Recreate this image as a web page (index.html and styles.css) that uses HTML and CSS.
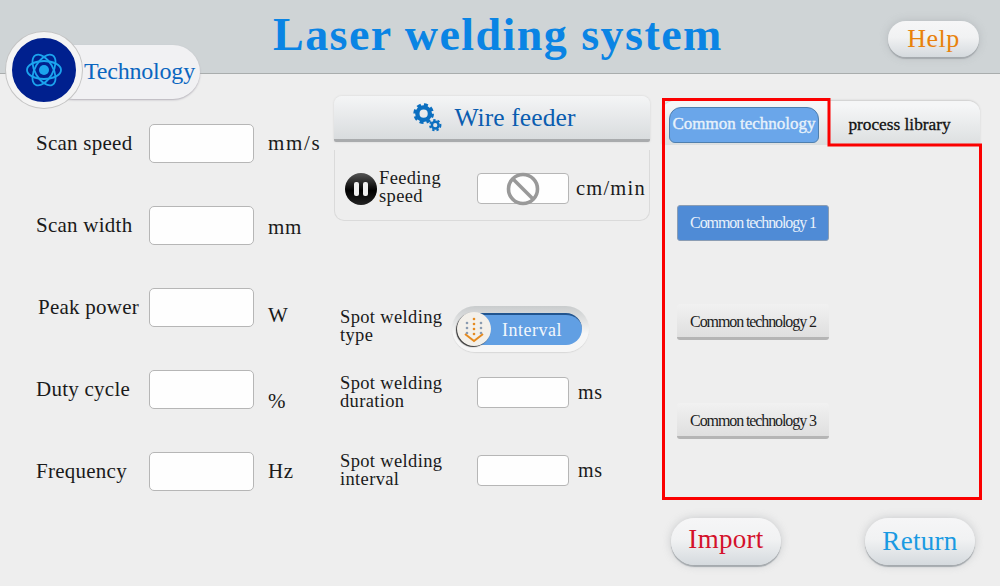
FILE: index.html
```html
<!DOCTYPE html>
<html lang="en">
<head>
<meta charset="utf-8">
<title>Laser welding system</title>
<link rel="stylesheet" href="styles.css">
</head>
<body>
<div class="screen">
  <header class="topbar">
    <h1 class="title">Laser welding system</h1>
    <button class="pill help">Help</button>
  </header>

  <div class="badge">
    <div class="badge-disc">
      <svg viewBox="0 0 40 40" width="40" height="40" fill="none" stroke="#1ba4ee" stroke-width="1.8">
        <circle cx="20" cy="20" r="5" fill="#1ba4ee" stroke="none"/>
        <ellipse cx="20" cy="20" rx="17" ry="9"/>
        <ellipse cx="20" cy="20" rx="17" ry="9" transform="rotate(60 20 20)"/>
        <ellipse cx="20" cy="20" rx="17" ry="9" transform="rotate(120 20 20)"/>
      </svg>
    </div>
    <span class="badge-text">Technology</span>
  </div>

  <main class="content">
    <section class="col-left">
      <div class="row"><span class="label">Scan speed</span><div class="field"></div><span class="unit unit-wide">mm/s</span></div>
      <div class="row"><span class="label">Scan width</span><div class="field"></div><span class="unit nudge-s">mm</span></div>
      <div class="row"><span class="label peak">Peak power</span><div class="field"></div><span class="unit nudge-m">W</span></div>
      <div class="row"><span class="label">Duty cycle</span><div class="field"></div><span class="unit nudge-l">%</span></div>
      <div class="row"><span class="label">Frequency</span><div class="field"></div><span class="unit">Hz</span></div>
    </section>

    <section class="col-mid">
      <button class="wire">
        <svg viewBox="0 0 30 30" width="29" height="29" fill="none" stroke="#0b6fc0">
          <circle cx="11" cy="11" r="6.500" stroke-width="4.500"/>
          <circle cx="11" cy="11" r="9.200" stroke-width="3" stroke-dasharray="4.100 3.130"/>
          <circle cx="23" cy="23" r="3.500" stroke-width="2.600"/>
          <circle cx="23" cy="23" r="5.400" stroke-width="2" stroke-dasharray="2.400 2.130"/>
        </svg>
        <span>Wire feeder</span>
      </button>
      <div class="feed-panel">
        <span class="pause"><i></i><i></i></span>
        <span class="label-two feed-label">Feeding<br>speed</span>
        <div class="field small center">
          <svg viewBox="0 0 34 34" width="34" height="34" fill="none" stroke="#999" stroke-width="3.600">
            <circle cx="17" cy="17" r="14.500"/>
            <path d="M7 7l20 20"/>
          </svg>
        </div>
        <span class="unit feed-unit">cm/min</span>
      </div>

      <div class="spot spot-type">
        <span class="label-two raised">Spot welding<br>type</span>
        <div class="toggle">
          <div class="toggle-track">
            <span class="toggle-knob">
              <svg viewBox="0 0 30 30" width="30" height="30" fill="none">
                <g fill="#8a9bb0"><circle cx="8" cy="9" r="1.300"/><circle cx="8" cy="14" r="1.300"/><circle cx="8" cy="19" r="1.300"/><circle cx="22" cy="9" r="1.300"/><circle cx="22" cy="14" r="1.300"/><circle cx="22" cy="19" r="1.300"/></g>
                <g fill="#e58a1f"><circle cx="15" cy="5" r="1.300"/><circle cx="15" cy="10" r="1.300"/><circle cx="15" cy="15" r="1.300"/><circle cx="15" cy="20" r="1.300"/></g>
                <path d="M6 20l9 7 9-7" stroke="#e58a1f" stroke-width="2"/>
              </svg>
            </span>
            <span class="toggle-text">Interval</span>
          </div>
        </div>
      </div>
      <div class="spot spot-duration">
        <span class="label-two">Spot welding<br>duration</span>
        <div class="field small"></div>
        <span class="unit">ms</span>
      </div>
      <div class="spot spot-interval">
        <span class="label-two">Spot welding<br>interval</span>
        <div class="field small"></div>
        <span class="unit">ms</span>
      </div>
    </section>

    <section class="col-right">
      <div class="tabs">
        <button class="tab active">Common technology</button>
        <button class="tab">process library</button>
      </div>
      <div class="tab-panel">
        <button class="tech selected">Common technology 1</button>
        <button class="tech">Common technology 2</button>
        <button class="tech">Common technology 3</button>
      </div>
      <svg class="red-outline" viewBox="0 0 320 402" width="320" height="402" fill="none">
        <path d="M1.500 1.500H167V47H318.500V400.500H1.500Z" stroke="#fb0000" stroke-width="3"/>
      </svg>
      <div class="actions">
        <button class="pill import">Import</button>
        <button class="pill return">Return</button>
      </div>
    </section>
  </main>
</div>
</body>
</html>
```
FILE: styles.css
```css
* { box-sizing: border-box; }
html, body { margin: 0; padding: 0; }
body {
  width: 1000px;
  height: 586px;
  overflow: hidden;
  background: #eeeeee;
  font-family: "Liberation Serif", serif;
  color: #1a1a1a;
}
button { font-family: inherit; padding: 0; cursor: pointer; }
.screen { position: relative; width: 1000px; height: 586px; }

.topbar {
  height: 74px;
  background: #cfd4d6;
  border-bottom: 1px solid #a9adad;
  display: flex;
  align-items: flex-start;
  padding-left: 273px;
  padding-right: 21px;
  justify-content: space-between;
}
.title {
  margin: 7px 0 0;
  font-size: 46px;
  line-height: 56px;
  font-weight: 700;
  letter-spacing: 1.450px;
  color: #0a84e4;
  white-space: nowrap;
}
.pill {
  border: none;
  border-radius: 22px;
  background: linear-gradient(#f6f6f7 0%, #f1f2f3 45%, #d5dade 100%);
  box-shadow: 0 2px 1px #a5aaae, 0 0 8px rgba(150, 155, 160, .45);
}
.help {
  margin-top: 21px;
  width: 91px;
  height: 36px;
  font-size: 26px;
  color: #e8820c;
  letter-spacing: .5px;
}

.badge {
  position: absolute;
  left: 6px;
  top: 32px;
  width: 194px;
  height: 76px;
  display: flex;
  align-items: center;
}
.badge::before {
  content: "";
  position: absolute;
  left: 40px;
  top: 13px;
  width: 154px;
  height: 54px;
  border-radius: 27px;
  background: #f1f1f3;
  box-shadow: 0 1px 2px #b3b0b8;
}
.badge-disc {
  position: relative;
  width: 76px;
  height: 76px;
  border-radius: 50%;
  background: #00208e;
  border: 6px solid #f4f4f4;
  box-shadow: 0 0 0 1px #c4c4c4;
  display: flex;
  align-items: center;
  justify-content: center;
}
.badge-text {
  position: relative;
  margin: 3px 0 0 2px;
  font-size: 24px;
  color: #0a66c0;
  letter-spacing: -.2px;
}

.content { display: flex; align-items: flex-start; }

.col-left {
  width: 334px;
  padding: 50px 0 0 36px;
  display: flex;
  flex-direction: column;
  gap: 43.500px;
}
.row { display: flex; align-items: center; height: 38.500px; }
.label { width: 113px; font-size: 21px; letter-spacing: .25px; white-space: nowrap; }
.peak { padding-left: 2px; }
.field {
  flex: none;
  width: 105px;
  height: 38.500px;
  background: #fefefe;
  border: 1px solid #b6b6b6;
  border-radius: 5px;
}
.unit { margin-left: 14px; font-size: 21px; letter-spacing: .7px; white-space: nowrap; }
.unit-wide { letter-spacing: 1.700px; }
.nudge-s { margin-top: 4px; }
.nudge-m { margin-top: 16px; }
.nudge-l { margin-top: 24px; }

.col-mid { width: 328px; padding-top: 22px; }
.wire {
  width: 316px;
  height: 46px;
  border: none;
  border-radius: 8px 8px 2px 2px;
  background: linear-gradient(#f4f5f6, #d9dcde);
  border-bottom: 3px solid #a9abad;
  padding-left: 5px;
  display: flex;
  align-items: center;
  justify-content: center;
  gap: 12px;
  font-size: 25.500px;
  color: #0a5db0;
  letter-spacing: .1px;
  box-shadow: 0 0 2px #ccc;
}
.feed-panel {
  margin-top: 8px;
  width: 316px;
  height: 71px;
  border: 1px solid #dadada;
  border-top: none;
  border-radius: 0 0 10px 10px;
  display: flex;
  align-items: center;
  padding: 7px 0 0 10px;
}
.pause {
  flex: none;
  width: 32px;
  height: 32px;
  border-radius: 50%;
  background: linear-gradient(#555, #000 55%, #222);
  display: flex;
  align-items: center;
  justify-content: center;
  gap: 4px;
}
.pause i { width: 5px; height: 14px; background: #eee; border-radius: 2px; }
.label-two { font-size: 18.500px; line-height: 18px; letter-spacing: .35px; white-space: nowrap; }
.feed-label { margin: -4px 0 0 2px; width: 98px; }
.small { width: 92px; height: 31px; border-radius: 4px; }
.center { display: flex; align-items: center; justify-content: center; }
.feed-unit { margin-left: 7px; font-size: 20.500px; letter-spacing: 1.200px; }

.spot { display: flex; align-items: center; padding-left: 6px; }
.spot .label-two { width: 137px; }
.spot .raised { padding-bottom: 6px; }
.spot .unit { margin-left: 9px; font-size: 20px; }
.spot-type { margin-top: 85px; }
.spot-duration { margin-top: 22px; }
.spot-interval { margin-top: 42px; }
.toggle {
  flex: none;
  margin-left: -25px;
  width: 137px;
  height: 46px;
  border-radius: 23px;
  background: linear-gradient(#c9cccd, #f6f6f6 60%);
  box-shadow: 0 1px 1px #d8d8d8;
  padding: 7px 7px 7px 5px;
}
.toggle-track {
  height: 32px;
  border-radius: 16px;
  background: #619fe3;
  border-top: 2px solid #22558f;
  display: flex;
  align-items: center;
}
.toggle-knob {
  flex: none;
  width: 34px;
  height: 34px;
  margin-top: -2px;
  border-radius: 50%;
  background: #f3f0ea;
  box-shadow: -1px 1px 1px #333;
  display: flex;
  align-items: center;
  justify-content: center;
}
.toggle-text { margin-left: 11px; font-size: 18px; letter-spacing: .5px; color: #f2f7fc; }

.col-right { position: relative; width: 320px; padding-top: 24px; }
.red-outline { position: absolute; left: 0; top: 24px; }
.tabs {
  height: 44px;
  margin: 3px 2px 0 0;
  padding: 6px 0 0 7px;
  display: flex;
  border-radius: 12px 12px 0 0;
  background: linear-gradient(#f5f6f7 10%, #dcdfe0);
  box-shadow: 0 -1px 2px #ccc;
}
.tab {
  border: none;
  background: none;
  color: #111;
}
.tab.active {
  width: 150px;
  height: 36px;
  padding-bottom: 2px;
  border-radius: 12px 12px 6px 6px;
  background: #6aa6ea;
  border: 1px solid #4f7fae;
  color: #e8f2fb;
  font-size: 17px;
  -webkit-text-stroke: .35px #e8f2fb;
  white-space: nowrap;
}
.tab:not(.active) {
  flex: 1;
  text-align: center;
  padding: 0 0 3px 0;
  font-size: 17.300px;
  -webkit-text-stroke: .3px #111;
}
.tab-panel {
  height: 355px;
  padding: 60px 0 0 15px;
  display: flex;
  flex-direction: column;
  align-items: flex-start;
  gap: 63px;
  background: #eeeeee;
  border-radius: 8px 0 0 0;
}
.tech {
  width: 152px;
  height: 36px;
  border: none;
  border-radius: 3px;
  background: linear-gradient(#f1f1f1, #dfdfdf);
  border-bottom: 3px solid #b5b5b5;
  padding-top: 3px;
  font-size: 16px;
  letter-spacing: -1.100px;
  color: #1c1c1c;
  white-space: nowrap;
}
.tech.selected {
  background: #4f8bd6;
  border: 1px solid #8b9db3;
  padding-top: 0;
  color: #e8f1fb;
}
.actions {
  margin-top: 18px;
  padding: 0 7px 0 9px;
  display: flex;
  justify-content: space-between;
}
.import, .return { width: 110px; height: 47px; border-radius: 24px; font-size: 27px; letter-spacing: .3px; }
.import { color: #d4112b; padding-bottom: 4px; }
.return { color: #1a9ae2; }
```
